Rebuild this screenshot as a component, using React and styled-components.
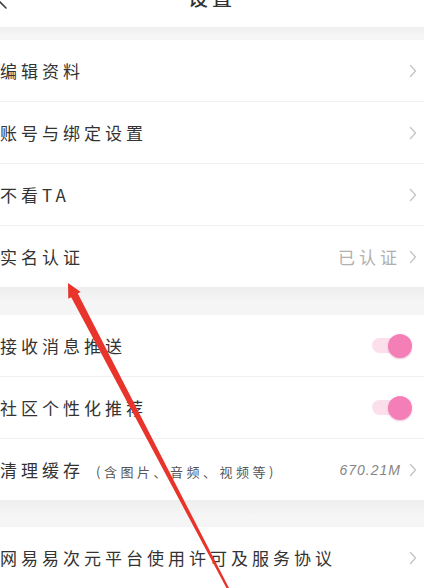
import styled, { createGlobalStyle } from 'styled-components'

const GlobalStyle = createGlobalStyle`
  html, body {
    margin: 0;
    padding: 0;
    background: #fff;
  }
  body {
    font-family: "Noto Sans CJK SC", "Noto Sans", sans-serif;
    overflow: hidden;
  }
`

const Page = styled.div`
  position: relative;
  width: 424px;
  height: 588px;
  overflow: hidden;
  background: #fff;
`

const Header = styled.header`
  height: 27px;
  display: flex;
  align-items: flex-start;
  justify-content: center;
  position: relative;
  overflow: hidden;
`

const BackIcon = styled.svg`
  position: absolute;
  left: -7px;
  top: -12px;
`

const Title = styled.h1`
  margin: -13px 0 0;
  font-size: 20px;
  line-height: 22px;
  font-weight: 500;
  color: #333;
  letter-spacing: 4px;
`

const Gap = styled.div`
  height: ${(p) => p.$h}px;
  background: linear-gradient(#eeeeee, #f6f6f6 60%, #f5f5f5);
`

const Row = styled.div`
  height: 61px;
  display: flex;
  align-items: center;
  justify-content: space-between;
  padding: 0 7px 0 0;
  border-bottom: ${(p) => (p.$last ? 'none' : '1px solid #f0f0f0')};
`

const Label = styled.span`
  font-size: 17px;
  color: #333;
  letter-spacing: 4px;
  white-space: nowrap;
`

const Note = styled.span`
  font-size: 13px;
  color: #555;
  letter-spacing: 3.5px;
  margin-left: 12px;
`

const Right = styled.div`
  display: flex;
  align-items: center;
  gap: 8px;
`

const Value = styled.span`
  font-size: 17px;
  color: #b0b0b0;
  letter-spacing: 4px;
`

const Size = styled.span`
  font-family: "Liberation Sans", Arial, sans-serif;
  font-style: italic;
  font-size: 14px;
  color: #858585;
  letter-spacing: 1px;
`

const Toggle = styled.div`
  position: relative;
  width: 40px;
  height: 24px;
  margin-right: 5px;
  display: flex;
  align-items: center;
`

const Track = styled.div`
  width: 30px;
  height: 15px;
  border-radius: 8px;
  background: #fbe0ec;
`

const Knob = styled.div`
  position: absolute;
  right: 0;
  top: 0;
  width: 24px;
  height: 24px;
  border-radius: 50%;
  background: #f47fb6;
  box-shadow: 0 1px 2px rgba(200, 80, 140, 0.35);
`

const Overlay = styled.svg`
  position: absolute;
  left: 0;
  top: 0;
  pointer-events: none;
`

const Chevron = () => (
  <svg width='8' height='14' viewBox='0 0 8 14'>
    <path d='M1.5 1.5 L6.5 7 L1.5 12.5' fill='none' stroke='#c6c6c6' strokeWidth='1.4' strokeLinecap='round' strokeLinejoin='round' />
  </svg>
)

const Switch = () => (
  <Toggle>
    <Track />
    <Knob />
  </Toggle>
)

const App = () => {
  return (
    <Page>
      <GlobalStyle />
      <Header>
        <BackIcon width='16' height='22' viewBox='0 0 16 22'>
          <path d='M13 2 L4 11 L13 20' fill='none' stroke='#444' strokeWidth='1.6' strokeLinecap='round' strokeLinejoin='round' />
        </BackIcon>
        <Title>设置</Title>
      </Header>
      <Gap $h={13} />

      <Row>
        <Label>编辑资料</Label>
        <Chevron />
      </Row>
      <Row>
        <Label>账号与绑定设置</Label>
        <Chevron />
      </Row>
      <Row>
        <Label>不看TA</Label>
        <Chevron />
      </Row>
      <Row $last>
        <Label>实名认证</Label>
        <Right>
          <Value>已认证</Value>
          <Chevron />
        </Right>
      </Row>

      <Gap $h={28} />

      <Row>
        <Label>接收消息推送</Label>
        <Switch />
      </Row>
      <Row>
        <Label>社区个性化推荐</Label>
        <Switch />
      </Row>
      <Row $last>
        <Label>
          清理缓存<Note>(含图片、音频、视频等)</Note>
        </Label>
        <Right>
          <Size>670.21M</Size>
          <Chevron />
        </Right>
      </Row>

      <Gap $h={27} />

      <Row $last>
        <Label>网易易次元平台使用许可及服务协议</Label>
        <Chevron />
      </Row>

      <Overlay width='424' height='588' viewBox='0 0 424 588'>
        <polygon
          points='68,283 80.7,292.1 77.8,293.6 234.9,599.5 233.1,600.5 71.2,297.2 68.3,298.7'
          fill='#e8342a'
        />
      </Overlay>
    </Page>
  )
}

export default App
